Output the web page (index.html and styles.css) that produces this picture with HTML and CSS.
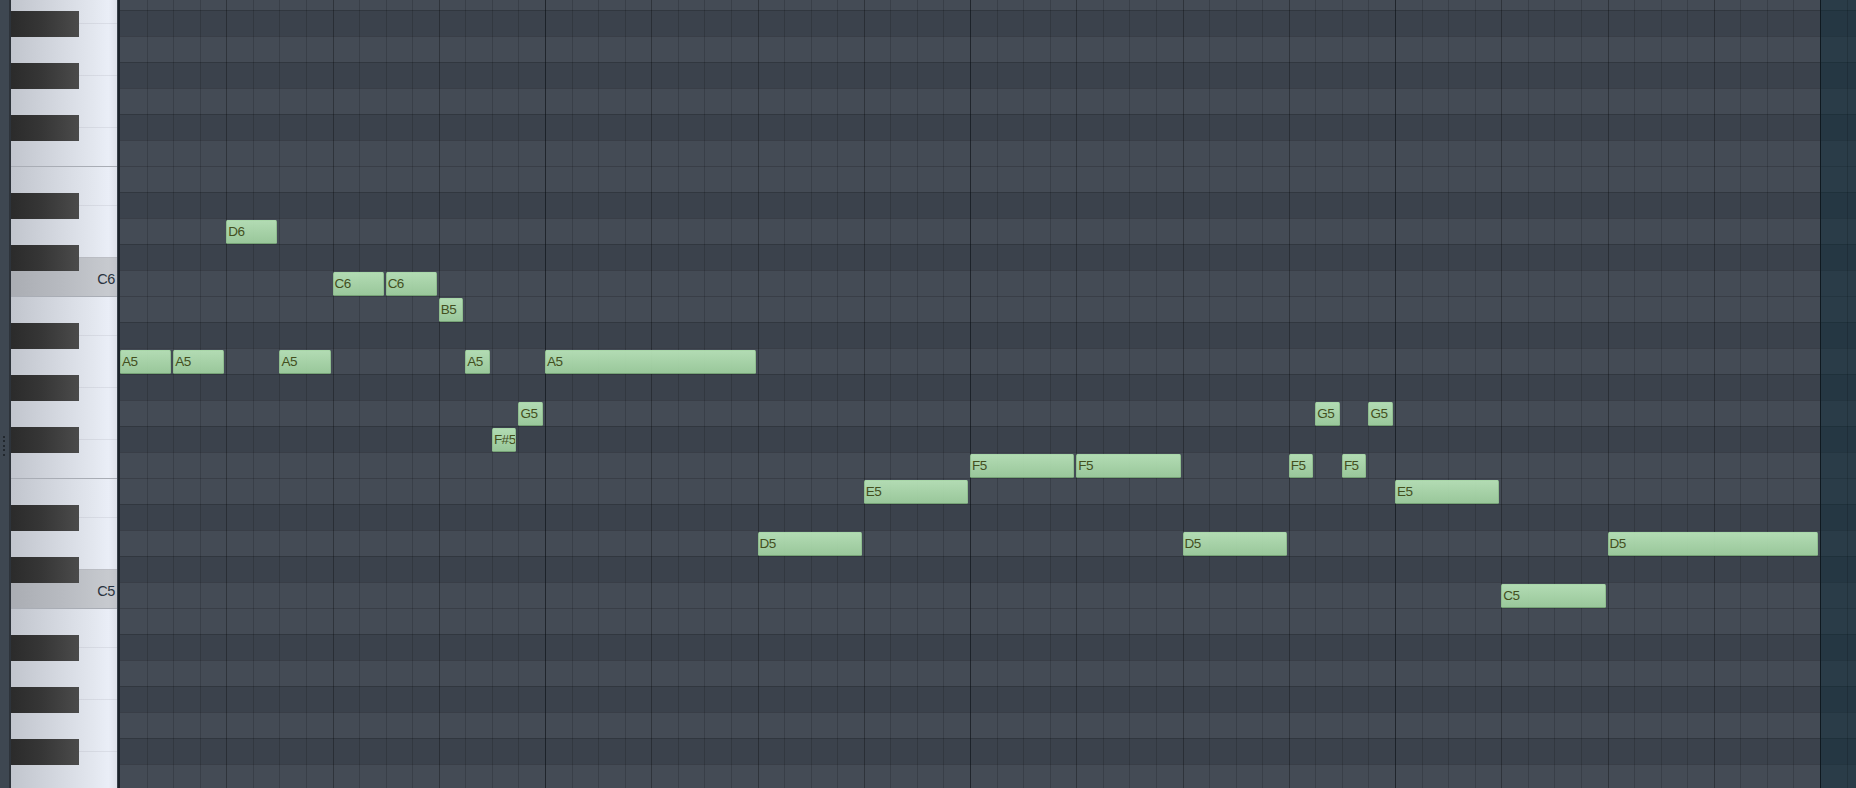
FILE: index.html
```html
<!DOCTYPE html>
<html>
<head>
<meta charset="utf-8">
<link rel="stylesheet" href="styles.css">
</head>
<body>
<div class="app">
  <div class="strip">
    <span class="grip"></span><span class="grip"></span><span class="grip"></span><span class="grip"></span><span class="grip"></span>
  </div>
  <div class="piano">
    <div class="whites">
      <div class="wk s"></div>
      <div class="wk"></div>
      <div class="wk"></div>
      <div class="wk s"></div>
      <div class="wk s edge"></div>
      <div class="wk"></div>
      <div class="wk s c"><span class="lbl">C6</span></div>
      <div class="wk s edge"></div>
      <div class="wk"></div>
      <div class="wk"></div>
      <div class="wk s"></div>
      <div class="wk s edge"></div>
      <div class="wk"></div>
      <div class="wk s c"><span class="lbl">C5</span></div>
      <div class="wk s edge"></div>
      <div class="wk"></div>
      <div class="wk"></div>
      <div class="wk s"></div>
    </div>
    <div class="blacks">
      <div class="bk-row"></div><div class="bk-row"><div class="bk"></div></div><div class="bk-row"></div><div class="bk-row"><div class="bk"></div></div><div class="bk-row"></div><div class="bk-row"><div class="bk"></div></div><div class="bk-row"></div><div class="bk-row"></div><div class="bk-row"><div class="bk"></div></div><div class="bk-row"></div><div class="bk-row"><div class="bk"></div></div><div class="bk-row"></div>
      <div class="bk-row"></div><div class="bk-row"><div class="bk"></div></div><div class="bk-row"></div><div class="bk-row"><div class="bk"></div></div><div class="bk-row"></div><div class="bk-row"><div class="bk"></div></div><div class="bk-row"></div><div class="bk-row"></div><div class="bk-row"><div class="bk"></div></div><div class="bk-row"></div><div class="bk-row"><div class="bk"></div></div><div class="bk-row"></div>
      <div class="bk-row"></div><div class="bk-row"><div class="bk"></div></div><div class="bk-row"></div><div class="bk-row"><div class="bk"></div></div><div class="bk-row"></div><div class="bk-row"><div class="bk"></div></div><div class="bk-row"></div>
    </div>
  </div>
  <div class="divider"></div>
  <div class="roll">
    <div class="rows">
      <div class="row"></div><div class="row b"></div><div class="row"></div><div class="row b"></div><div class="row"></div><div class="row b"></div><div class="row"></div><div class="row"></div><div class="row b"></div><div class="row"></div><div class="row b"></div><div class="row"></div>
      <div class="row"></div><div class="row b"></div><div class="row"></div><div class="row b"></div><div class="row"></div><div class="row b"></div><div class="row"></div><div class="row"></div><div class="row b"></div><div class="row"></div><div class="row b"></div><div class="row"></div>
      <div class="row"></div><div class="row b"></div><div class="row"></div><div class="row b"></div><div class="row"></div><div class="row b"></div><div class="row"></div>
    </div>
    <div class="overlay">
      <div class="cols">
        <div class="col first"></div><div class="col"></div><div class="col"></div><div class="col"></div><div class="col beat"></div><div class="col"></div><div class="col"></div><div class="col"></div><div class="col beat"></div><div class="col"></div><div class="col"></div><div class="col"></div><div class="col beat"></div><div class="col"></div><div class="col"></div><div class="col"></div>
        <div class="col bar"></div><div class="col"></div><div class="col"></div><div class="col"></div><div class="col beat"></div><div class="col"></div><div class="col"></div><div class="col"></div><div class="col beat"></div><div class="col"></div><div class="col"></div><div class="col"></div><div class="col beat"></div><div class="col"></div><div class="col"></div><div class="col"></div>
        <div class="col bar"></div><div class="col"></div><div class="col"></div><div class="col"></div><div class="col beat"></div><div class="col"></div><div class="col"></div><div class="col"></div><div class="col beat"></div><div class="col"></div><div class="col"></div><div class="col"></div><div class="col beat"></div><div class="col"></div><div class="col"></div><div class="col"></div>
        <div class="col bar"></div><div class="col"></div><div class="col"></div><div class="col"></div><div class="col beat"></div><div class="col"></div><div class="col"></div><div class="col"></div><div class="col beat"></div><div class="col"></div><div class="col"></div><div class="col"></div><div class="col beat"></div><div class="col"></div><div class="col"></div><div class="col"></div>
      </div>
      <div class="end"><div class="end-step"></div></div>
    </div>
    <div class="notes">
      <div class="note" style="grid-column: 1 / span 2; grid-row: 15">A5</div>
      <div class="note" style="grid-column: 3 / span 2; grid-row: 15">A5</div>
      <div class="note" style="grid-column: 5 / span 2; grid-row: 10">D6</div>
      <div class="note" style="grid-column: 7 / span 2; grid-row: 15">A5</div>
      <div class="note" style="grid-column: 9 / span 2; grid-row: 12">C6</div>
      <div class="note" style="grid-column: 11 / span 2; grid-row: 12">C6</div>
      <div class="note" style="grid-column: 13 / span 1; grid-row: 13">B5</div>
      <div class="note" style="grid-column: 14 / span 1; grid-row: 15">A5</div>
      <div class="note" style="grid-column: 15 / span 1; grid-row: 18">F#5</div>
      <div class="note" style="grid-column: 16 / span 1; grid-row: 17">G5</div>
      <div class="note" style="grid-column: 17 / span 8; grid-row: 15">A5</div>
      <div class="note" style="grid-column: 25 / span 4; grid-row: 22">D5</div>
      <div class="note" style="grid-column: 29 / span 4; grid-row: 20">E5</div>
      <div class="note" style="grid-column: 33 / span 4; grid-row: 19">F5</div>
      <div class="note" style="grid-column: 37 / span 4; grid-row: 19">F5</div>
      <div class="note" style="grid-column: 41 / span 4; grid-row: 22">D5</div>
      <div class="note" style="grid-column: 45 / span 1; grid-row: 19">F5</div>
      <div class="note" style="grid-column: 46 / span 1; grid-row: 17">G5</div>
      <div class="note" style="grid-column: 47 / span 1; grid-row: 19">F5</div>
      <div class="note" style="grid-column: 48 / span 1; grid-row: 17">G5</div>
      <div class="note" style="grid-column: 49 / span 4; grid-row: 20">E5</div>
      <div class="note" style="grid-column: 53 / span 4; grid-row: 24">C5</div>
      <div class="note" style="grid-column: 57 / span 8; grid-row: 22">D5</div>
    </div>
  </div>
</div>
</body>
</html>
```

FILE: styles.css
```css
* { box-sizing: border-box; margin: 0; padding: 0; }

html, body {
  width: 1856px;
  height: 788px;
  overflow: hidden;
  background: #3c434d;
}

body {
  font-family: "Liberation Sans", Arial, sans-serif;
}

.app {
  display: flex;
  width: 1856px;
  height: 788px;
  overflow: hidden;
}

/* left thin strip with grip */
.strip {
  flex: none;
  width: 11px;
  height: 788px;
  background: #3e4751;
  border-right: 2px solid #2d333a;
  display: flex;
  flex-direction: column;
  align-items: flex-start;
  padding: 436px 0 0 3px;
  gap: 2.4px;
}

.grip {
  display: block;
  width: 2px;
  height: 2px;
  background: #22282e;
}

/* piano keyboard */
.piano {
  flex: none;
  position: relative;
  width: 106px;
  height: 788px;
  overflow: hidden;
}

.whites {
  display: flex;
  flex-direction: column;
  margin-top: -16px;
}

.wk {
  flex: none;
  height: 52px;
  border-top: 1px solid rgba(140, 146, 158, 0.16);
  background: linear-gradient(to right, #c1c5cd 0%, #d2d6de 40%, #e3e7ef 78%, #eaeef7 92%, #dde1e9 100%);
  display: flex;
  align-items: center;
  justify-content: flex-end;
  padding-right: 2px;
}

.wk.s { height: 39px; }

.wk.edge { border-top-color: #a9adb5; }

.wk.c {
  padding-top: 3px;
  background: linear-gradient(to right, #aaadb3 0%, #b8bbc1 50%, #c7cacf 92%, #bfc2c8 100%);
}

.lbl {
  font-size: 14.5px;
  letter-spacing: -0.4px;
  color: #2a3440;
  line-height: 16px;
}

.blacks {
  position: absolute;
  top: -16px;
  left: 0;
  right: 0;
  display: flex;
  flex-direction: column;
}

.bk-row {
  flex: none;
  height: 26px;
  padding-top: 1px;
}

.bk {
  width: 68px;
  height: 26px;
  background: linear-gradient(to right, #2b2b2b 0%, #363636 45%, #4b4b4b 100%);
}

.divider {
  flex: none;
  width: 3px;
  height: 788px;
  border-left: 1px solid #39414a;
  background: #1b2229;
}

/* note grid */
.roll {
  position: relative;
  flex: 1;
  height: 788px;
  overflow: hidden;
}

.rows {
  display: flex;
  flex-direction: column;
  margin-top: -16px;
}

.row {
  flex: none;
  height: 26px;
  border-top: 1px solid rgba(0, 0, 0, 0.16);
  background: #444b55;
}

.row.b { background: #3b424c; }

.overlay {
  position: absolute;
  top: 0;
  left: 0;
  right: 0;
  bottom: 0;
  display: flex;
}

.cols {
  display: flex;
  width: 1700px;
  flex: none;
}

.col {
  flex: 1;
  border-left: 1px solid rgba(0, 0, 0, 0.15);
}

.col.first { border-left-color: transparent; }
.col.beat { border-left-color: rgba(0, 0, 0, 0.3); }
.col.bar { border-left-color: rgba(10, 14, 20, 0.62); }

.end {
  flex: 1;
  display: flex;
  border-left: 1px solid #0f1920;
  background: rgba(8, 40, 56, 0.42);
}

.end-step {
  flex: none;
  width: 26.5625px;
  border-right: 1px solid rgba(0, 0, 0, 0.15);
}

.notes {
  position: absolute;
  top: -16px;
  left: 0;
  width: 1700px;
  display: grid;
  grid-template-columns: repeat(64, 1fr);
  grid-template-rows: repeat(31, 26px);
}

.note {
  margin: 2px 2px 0 0;
  border: 1px solid #8fbd8f;
  border-top-color: #a9d7a9;
  border-bottom-color: #76a276;
  border-radius: 1.5px;
  background: linear-gradient(to bottom, rgba(186, 230, 186, 0.93), rgba(160, 209, 160, 0.93));
  color: #434f1e;
  font-size: 13.5px;
  letter-spacing: -0.5px;
  line-height: 22px;
  padding-left: 1px;
  white-space: nowrap;
  overflow: hidden;
}
```
